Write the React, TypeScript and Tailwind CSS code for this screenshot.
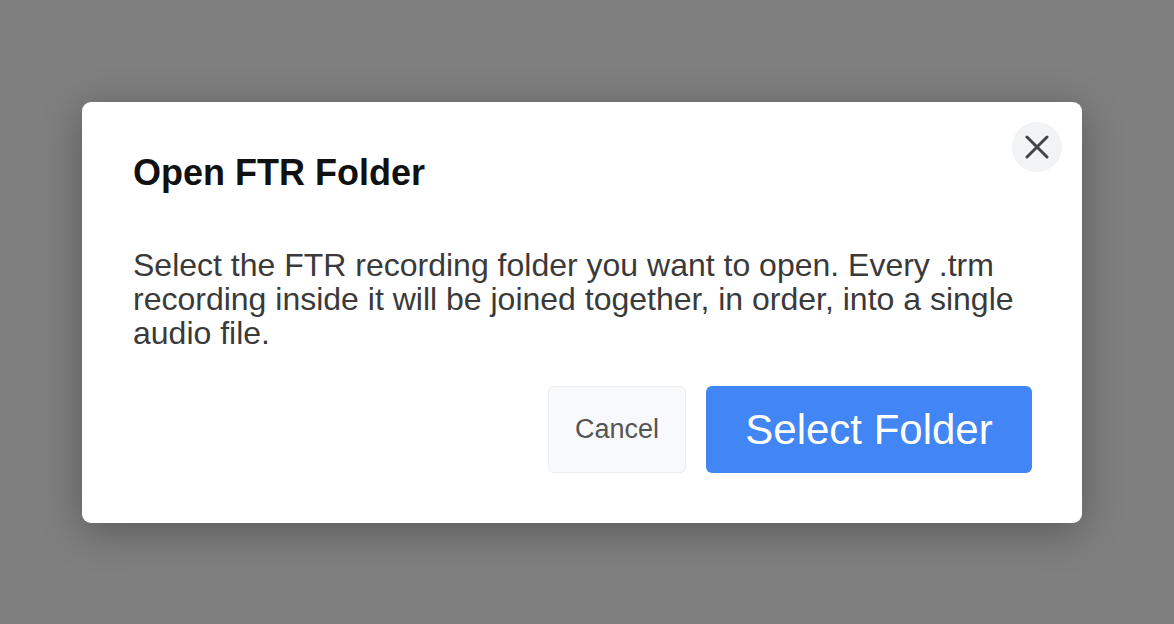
export default function App() {
  return (
    <div
      className="w-full h-[624px] bg-[#7f7f7f] flex items-center pl-[82px]"
      style={{ fontFamily: '"Liberation Sans", Arial, sans-serif' }}
    >
      <div className="relative w-[1000px] bg-white rounded-[9px] pl-[51px] pr-[50px] pt-[53px] pb-[50px] shadow-[0_8px_40px_rgba(0,0,0,0.3)]">
        <button
          type="button"
          aria-label="Close"
          className="absolute top-[20px] right-[20px] w-[50px] h-[50px] rounded-full bg-[#f1f3f4] flex items-center justify-center"
        >
          <svg width="24" height="24" viewBox="0 0 24 24" fill="none">
            <path d="M2 2 L22 22 M22 2 L2 22" stroke="#444" strokeWidth="3" strokeLinecap="round" />
          </svg>
        </button>

        <h2 className="text-[36px] leading-[36px] font-bold text-[#111]">Open FTR Folder</h2>

        <p className="mt-[57px] text-[32px] leading-[34px] text-[#3a3a3a]">
          Select the FTR recording folder you want to open. Every .trm recording inside it will be joined
          together, in order, into a single audio file.
        </p>

        <div className="mt-[36px] flex justify-end gap-[20px]">
          <button
            type="button"
            className="w-[138px] h-[87px] rounded-[6px] bg-[#f8f9fa] border border-[#eeeeee] text-[27px] text-[#555]"
          >
            Cancel
          </button>
          <button
            type="button"
            className="w-[326px] h-[87px] rounded-[6px] bg-[#4285f4] text-[42px] text-white"
          >
            Select Folder
          </button>
        </div>
      </div>
    </div>
  );
}
